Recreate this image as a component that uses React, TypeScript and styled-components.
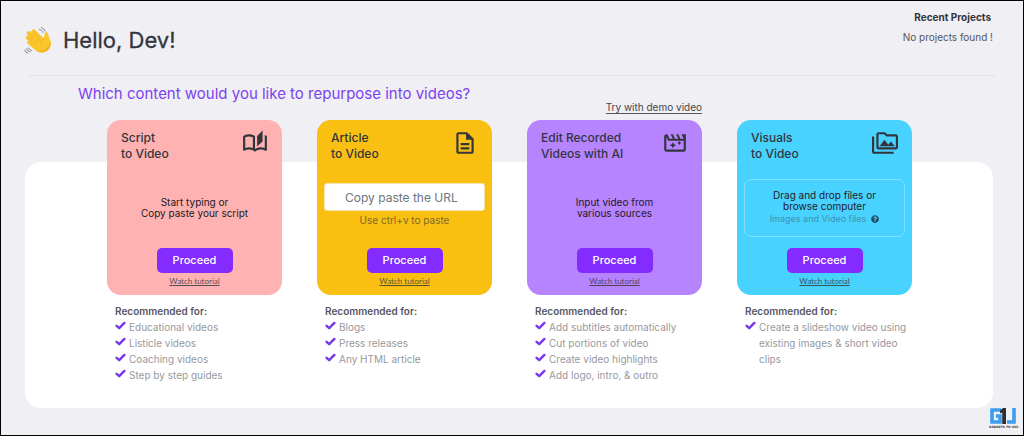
import React from "react";
import styled, { createGlobalStyle } from "styled-components";
import {
  MdOutlineAutoStories,
  MdOutlineDescription,
  MdOutlineMovieFilter,
  MdOutlinePermMedia,
} from "react-icons/md";
import { FaQuestionCircle } from "react-icons/fa";

const GlobalStyle = createGlobalStyle`
  *, *::before, *::after { box-sizing: border-box; }
  body {
    margin: 0;
    background: #f0eff4;
    color: #33353d;
    font-family: Inter, "Liberation Sans", sans-serif;
  }
  h1, h2, h3, h4, p, ul { margin: 0; padding: 0; }
  ul { list-style: none; }
  svg { display: block; flex: none; }
`;

const Page = styled.div`
  position: relative;
  min-height: 100vh;
  padding: 8px 30px 24px 24px;
  border: 1px solid #000;
`;

const Header = styled.header`
  display: flex;
  justify-content: space-between;
  align-items: flex-start;
  margin-left: 3px;
  margin-right: -3px;
  height: 67px;
  border-bottom: 1px solid #e3e2e8;
`;

const Greeting = styled.div`
  display: flex;
  align-items: center;
  gap: 11px;
  margin-left: -4px;
  padding-top: 17px;
`;

const Hello = styled.h1`
  font-size: 22px;
  line-height: 28px;
  font-weight: 400;
  -webkit-text-stroke: 0.3px;
`;

const Recent = styled.section`
  text-align: right;
`;

const RecentTitle = styled.h2`
  padding-right: 5px;
  font-size: 10px;
  line-height: 16px;
  font-weight: 700;
`;

const RecentEmpty = styled.p`
  padding: 4px 3px 0 0;
  font-size: 10px;
  line-height: 16px;
  color: #55565c;
`;

const Question = styled.h2`
  padding: 10px 0 0 53px;
  font-size: 15px;
  line-height: 16px;
  font-weight: 400;
  color: #7c42ef;
`;

const Panel = styled.main`
  display: flow-root;
  margin-top: 60px;
  padding: 0 81px 25px 82px;
  border-radius: 16px;
  background: #fff;
`;

const Columns = styled.div`
  display: grid;
  grid-template-columns: repeat(4, minmax(0, 1fr));
  column-gap: 35px;
  margin-top: -60px;
`;

const Column = styled.section`
  display: flex;
  flex-direction: column;
`;

const DemoSlot = styled.div`
  display: flex;
  justify-content: flex-end;
  align-items: flex-start;
  height: 18px;
`;

const DemoLink = styled.a`
  border-bottom: 1px solid #55565c;
  font-size: 10px;
  line-height: 11px;
  color: #44454b;
  text-decoration: none;
`;

const Card = styled.article<{ $tone: string }>`
  display: flex;
  flex-direction: column;
  align-items: center;
  height: 175px;
  padding: 10px 7px 8px;
  border-radius: 14px;
  background: ${(p) => p.$tone};
`;

const CardHead = styled.div`
  display: flex;
  justify-content: space-between;
  align-self: stretch;
  padding: 0 7px;
`;

const CardTitle = styled.h3`
  font-size: 12px;
  line-height: 16px;
  font-weight: 500;
  white-space: pre-line;
`;

const CardBody = styled.div`
  flex: 1;
  display: flex;
  flex-direction: column;
  align-items: center;
  justify-content: center;
  align-self: stretch;
  padding-top: 6px;
`;

const Prompt = styled.p`
  font-size: 10px;
  line-height: 11px;
  text-align: center;
  white-space: pre-line;
  color: #24191f;
`;

const UrlInput = styled.input`
  width: 100%;
  height: 28px;
  padding: 0 20px;
  border: 1px solid #f3e3ad;
  border-radius: 3px;
  background: #fff;
  font-family: inherit;
  font-size: 12px;
  color: #33353d;
  &::placeholder {
    color: #6c757d;
    opacity: 1;
  }
`;

const Hint = styled.p`
  padding: 1px 0 5px;
  font-size: 10px;
  line-height: 16px;
  color: #80692b;
`;

const DropZone = styled.div`
  display: flex;
  flex-direction: column;
  align-items: center;
  justify-content: center;
  width: 100%;
  height: 58px;
  border: 1px solid #7fdfff;
  border-radius: 7px;
`;

const Formats = styled.p`
  display: flex;
  align-items: center;
  gap: 5px;
  font-size: 9px;
  line-height: 14px;
  color: #3c93b3;
`;

const Proceed = styled.button`
  width: 76px;
  height: 25px;
  padding: 0 0 2px;
  border: 0;
  border-radius: 5px;
  background: #842bff;
  color: #fff;
  font-family: inherit;
  font-size: 11px;
  font-weight: 500;
  cursor: pointer;
`;

const Tutorial = styled.a`
  padding-top: 3px;
  font-family: Lato, "Liberation Sans", sans-serif;
  font-size: 8px;
  line-height: 11px;
  color: #33353d;
  opacity: 0.8;
`;

const Recommended = styled.div`
  padding: 8px 0 0 8px;
`;

const RecommendedTitle = styled.h4`
  font-size: 10px;
  line-height: 16px;
  font-weight: 600;
  color: #56555f;
`;

const Item = styled.li`
  display: flex;
  align-items: flex-start;
  gap: 3px;
  font-size: 10px;
  line-height: 16px;
  color: #98989c;
  svg {
    margin-top: 1px;
  }
`;

const Mark = styled.div`
  position: absolute;
  right: 6px;
  bottom: 6px;
  width: 28px;
  font-family: "DejaVu Sans", sans-serif;
  font-size: 3px;
  line-height: 4px;
  font-weight: 700;
  text-align: center;
  white-space: nowrap;
  svg {
    margin: 0 auto 1px;
  }
`;

function Check() {
  return (
    <svg width="11" height="11" viewBox="0 0 11 11" fill="none" aria-hidden="true">
      <path
        d="M1.600 5.800 4.200 8.200 9.400 2.900"
        stroke="#7a35ee"
        strokeWidth="2.400"
        strokeLinecap="round"
        strokeLinejoin="round"
      />
    </svg>
  );
}

function WavingHand() {
  return (
    <svg width="28" height="28" viewBox="0 0 28 28" fill="none" aria-hidden="true">
      <g stroke="#f9c12c" strokeLinecap="round">
        <path d="M5 16.5 12 22" strokeWidth="3.6" />
        <path d="M3.8 11.6 14 20" strokeWidth="4" />
        <path d="M5 7.4 16 18" strokeWidth="4.4" />
        <path d="M9.6 5.6 19 15" strokeWidth="4.4" />
      </g>
      <path
        d="M10 10 19.5 12.5C20.2 10.6 20.4 8.6 21 7c.8-1.6 3-1 3.2 1 .2 2.600 1.600 4.600 2.300 7 .9 3.600-.4 7.500-3.500 9.800-3.500 2.500-8 2-11-.3L5 18Z"
        fill="#fbc62b"
      />
      <path
        d="M7 15.500l5 4M7 11l6.500 6M9 7.700l7 7M19.500 12.500c-2 1.500-2.600 3.300-2.200 5"
        stroke="#eaa81e"
        strokeWidth=".6"
        strokeLinecap="round"
      />
      <path d="M26.500 15c.9 3.600-.4 7.500-3.500 9.800-3.500 2.500-8 2-11-.3 5 1.500 12.500-.5 14.500-9.500Z" fill="#f3b41f" />
      <path
        d="M15.500 3.500c1.600.3 2.900 1.400 3.500 3M17.500 1.700c1.900.5 3.100 1.800 3.600 3.500M5.800 25.800c-1.600-.4-2.700-1.600-3-3.200M3.800 27c-1.500-.4-2.500-1.400-2.900-2.900M7.500 24.500c-1.400-.3-2.500-1.300-2.900-2.500"
        stroke="#6d7580"
        strokeWidth=".9"
        strokeLinecap="round"
      />
    </svg>
  );
}

function Brand() {
  return (
    <Mark>
      <svg width="26" height="16" viewBox="0 0 26 16" fill="none" aria-hidden="true">
        <path d="M11 2H2v12h8V8H6M17 14h7V0" stroke="#3f9df0" strokeWidth="3.600" />
        <path d="M10 2.500 13 0h3v16h-3.800V4.500L10 5.500Z" fill="#2b3038" />
      </svg>
      GADGETS TO USE
    </Mark>
  );
}

type CardData = {
  title: string;
  tone: string;
  icon: React.ReactNode;
  body: React.ReactNode;
  demo?: boolean;
  items: string[];
};

const cards: CardData[] = [
  {
    title: "Script\nto Video",
    tone: "#ffb2b2",
    icon: <MdOutlineAutoStories size={26} />,
    body: <Prompt>{"Start typing or\nCopy paste your script"}</Prompt>,
    items: ["Educational videos", "Listicle videos", "Coaching videos", "Step by step guides"],
  },
  {
    title: "Article\nto Video",
    tone: "#f9c012",
    icon: <MdOutlineDescription size={26} />,
    body: (
      <>
        <UrlInput type="url" aria-label="Article URL" placeholder="Copy paste the URL" />
        <Hint>Use ctrl+v to paste</Hint>
      </>
    ),
    items: ["Blogs", "Press releases", "Any HTML article"],
  },
  {
    title: "Edit Recorded\nVideos with AI",
    tone: "#b684ff",
    icon: <MdOutlineMovieFilter size={26} />,
    body: <Prompt>{"Input video from\nvarious sources"}</Prompt>,
    demo: true,
    items: [
      "Add subtitles automatically",
      "Cut portions of video",
      "Create video highlights",
      "Add logo, intro, & outro",
    ],
  },
  {
    title: "Visuals\nto Video",
    tone: "#48d2ff",
    icon: <MdOutlinePermMedia size={26} />,
    body: (
      <DropZone>
        <Prompt>{"Drag and drop files or\nbrowse computer"}</Prompt>
        <Formats>
          Images and Video files
          <FaQuestionCircle size={8} color="#1f4a63" />
        </Formats>
      </DropZone>
    ),
    items: ["Create a slideshow video using existing images & short video clips"],
  },
];

export default function App() {
  return (
    <>
      <GlobalStyle />
      <Page>
        <Header>
          <Greeting>
            <WavingHand />
            <Hello>Hello, Dev!</Hello>
          </Greeting>
          <Recent>
            <RecentTitle>Recent Projects</RecentTitle>
            <RecentEmpty>No projects found !</RecentEmpty>
          </Recent>
        </Header>
        <Question>Which content would you like to repurpose into videos?</Question>
        <Panel>
          <Columns>
            {cards.map((card) => (
              <Column key={card.title}>
                <DemoSlot>{card.demo && <DemoLink href="#demo">Try with demo video</DemoLink>}</DemoSlot>
                <Card $tone={card.tone}>
                  <CardHead>
                    <CardTitle>{card.title}</CardTitle>
                    {card.icon}
                  </CardHead>
                  <CardBody>{card.body}</CardBody>
                  <Proceed type="button">Proceed</Proceed>
                  <Tutorial href="#tutorial">Watch tutorial</Tutorial>
                </Card>
                <Recommended>
                  <RecommendedTitle>Recommended for:</RecommendedTitle>
                  <ul>
                    {card.items.map((item) => (
                      <Item key={item}>
                        <Check />
                        {item}
                      </Item>
                    ))}
                  </ul>
                </Recommended>
              </Column>
            ))}
          </Columns>
        </Panel>
        <Brand />
      </Page>
    </>
  );
}
